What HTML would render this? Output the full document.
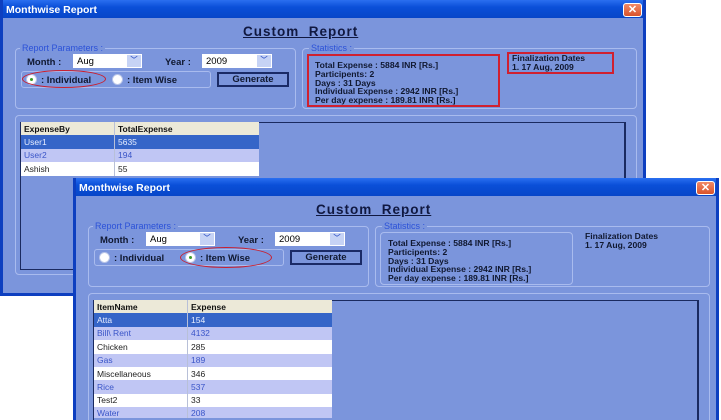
<!DOCTYPE html>
<html><head><meta charset="utf-8"><style>
*{margin:0;padding:0;box-sizing:border-box}
html,body{width:721px;height:420px;overflow:hidden}
body{background:#fff;position:relative;font-family:"Liberation Sans",Arial,sans-serif}
.win{position:absolute;width:646px;background:#7b95dc;border:3px solid #0d3fc0;border-top:none;overflow:hidden}
.tb{position:absolute;left:-3px;top:0;width:646px;height:18px;background:linear-gradient(#2a6ff0,#0a4fd8 40%,#0746c8);color:#fff;font-weight:bold;font-size:10.5px;padding:4px 0 0 6px}
.x{position:absolute;left:620px;top:3px;width:19px;height:14px;background:linear-gradient(#f08a68,#d9532c);border:1px solid #fff;border-radius:3px;color:#fff;font-size:11px;font-weight:bold;text-align:center;line-height:12px}
.a{position:absolute}
.title{font-size:13.5px;font-weight:bold;color:#101840;text-decoration:underline;letter-spacing:1px}
.fs{position:absolute;border:1px solid #a9bbee;border-radius:4px}
.lg{position:absolute;font-size:9px;color:#2c52d8;background:#7b95dc;padding:0 2px}
.lb{font-size:9.5px;font-weight:bold;color:#101830}
.cb{position:absolute;height:14px;background:#fff;font-size:9.5px;padding:2px 0 0 4px;color:#000}
.cb b{position:absolute;right:1px;top:1px;width:14px;height:12px;background:#c6d3f5;color:#3b5bc8;font-size:7px;text-align:center;line-height:12px}
.rg{position:absolute;border:1px solid #a9bbee;border-radius:3px}
.rd{position:absolute;width:11px;height:11px;border-radius:50%;background:#fff;border:1px solid #b9c5e8}
.rd.on::after{content:"";position:absolute;left:3px;top:3px;width:3px;height:3px;border-radius:50%;background:#3a9a2a}
.btn{position:absolute;height:15px;border:2px solid #1a2a66;background:#7b95dc;font-size:9.5px;font-weight:bold;text-align:center;line-height:11px;color:#101830}
.st{font-size:8.6px;font-weight:bold;color:#101830;line-height:8.8px}
.red{position:absolute;border:2px solid #d02030}
.ell{position:absolute;border:1.5px solid #c82030;border-radius:50%}
.grid{position:absolute;font-size:8.5px}
.grid div{height:13.4px;display:flex;align-items:center}
.grid span{display:block;padding-left:3px}
.grid span:first-child{width:94px;border-right:1px solid #b8c0d8;height:100%;display:flex;align-items:center}
.hd{background:#ece9d8;font-weight:bold;color:#111}
.s1{background:#3565c8;color:#e8eeff}
.s2{background:#c0c6f4;color:#3a55c8}
.s3{background:#fff;color:#222}
</style></head><body>

<!-- Window 1 -->
<div class="win" style="left:0;top:0;height:296px">
<div class="tb">Monthwise Report</div><div class="x">✕</div>
<div class="a title" style="left:240px;top:24px">Custom&nbsp; Report</div>
<div class="fs" style="left:12px;top:48px;width:281px;height:61px"></div>
<div class="lg" style="left:17px;top:43px">Report Parameters :</div>
<div class="a lb" style="left:24px;top:57px">Month :</div>
<div class="cb" style="left:70px;top:54px;width:69px">Aug<b>﹀</b></div>
<div class="a lb" style="left:162px;top:57px">Year :</div>
<div class="cb" style="left:199px;top:54px;width:70px">2009<b>﹀</b></div>
<div class="rg" style="left:18px;top:71px;width:190px;height:17px"></div>
<div class="rd on" style="left:23px;top:74px"></div>
<div class="a lb" style="left:38px;top:75px">: Individual</div>
<div class="rd" style="left:109px;top:74px"></div>
<div class="a lb" style="left:124px;top:75px">: Item Wise</div>
<div class="ell" style="left:19px;top:70px;width:84px;height:18px"></div>
<div class="btn" style="left:214px;top:72px;width:72px">Generate</div>
<div class="fs" style="left:299px;top:48px;width:335px;height:61px"></div>
<div class="lg" style="left:306px;top:43px">Statistics :</div>
<div class="red" style="left:304px;top:54px;width:193px;height:53px"></div>
<div class="a st" style="left:312px;top:61px">Total Expense : 5884 INR [Rs.]<br>Participents: 2<br>Days : 31 Days<br>Individual Expense : 2942 INR [Rs.]<br>Per day expense : 189.81 INR [Rs.]</div>
<div class="red" style="left:504px;top:52px;width:107px;height:22px"></div>
<div class="a st" style="left:509px;top:54px">Finalization Dates<br>1. 17 Aug, 2009</div>
<div class="fs" style="left:12px;top:115px;width:622px;height:160px"></div>
<div class="a" style="left:17px;top:122px;width:606px;height:148px;border:1px solid #1a2a60;border-right:2px solid #1a2a60"></div>
<div class="grid" style="left:18px;top:122px;width:238px">
<div class="hd"><span>ExpenseBy</span><span>TotalExpense</span></div>
<div class="s1"><span>User1</span><span>5635</span></div>
<div class="s2"><span>User2</span><span>194</span></div>
<div class="s3"><span>Ashish</span><span>55</span></div>
</div>
</div>

<!-- Window 2 -->
<div class="win" style="left:73px;top:178px;height:242px;border-bottom:none">
<div class="tb">Monthwise Report</div><div class="x">✕</div>
<div class="a title" style="left:240px;top:24px">Custom&nbsp; Report</div>
<div class="fs" style="left:12px;top:48px;width:281px;height:61px"></div>
<div class="lg" style="left:17px;top:43px">Report Parameters :</div>
<div class="a lb" style="left:24px;top:57px">Month :</div>
<div class="cb" style="left:70px;top:54px;width:69px">Aug<b>﹀</b></div>
<div class="a lb" style="left:162px;top:57px">Year :</div>
<div class="cb" style="left:199px;top:54px;width:70px">2009<b>﹀</b></div>
<div class="rg" style="left:18px;top:71px;width:190px;height:17px"></div>
<div class="rd" style="left:23px;top:74px"></div>
<div class="a lb" style="left:38px;top:75px">: Individual</div>
<div class="rd on" style="left:109px;top:74px"></div>
<div class="a lb" style="left:124px;top:75px">: Item Wise</div>
<div class="ell" style="left:104px;top:69px;width:92px;height:21px"></div>
<div class="btn" style="left:214px;top:72px;width:72px">Generate</div>
<div class="fs" style="left:299px;top:48px;width:335px;height:61px"></div>
<div class="lg" style="left:306px;top:43px">Statistics :</div>
<div class="fs" style="left:304px;top:54px;width:193px;height:53px"></div>
<div class="a st" style="left:312px;top:61px">Total Expense : 5884 INR [Rs.]<br>Participents: 2<br>Days : 31 Days<br>Individual Expense : 2942 INR [Rs.]<br>Per day expense : 189.81 INR [Rs.]</div>
<div class="a st" style="left:509px;top:54px">Finalization Dates<br>1. 17 Aug, 2009</div>
<div class="a" style="left:12px;top:115px;width:622px;height:127px;border:1px solid #a9bbee;border-bottom:none;border-radius:4px 4px 0 0"></div>
<div class="a" style="left:17px;top:122px;width:606px;height:120px;border:1px solid #1a2a60;border-right:2px solid #1a2a60;border-bottom:none"></div>
<div class="grid" style="left:18px;top:122px;width:238px">
<div class="hd"><span>ItemName</span><span>Expense</span></div>
<div class="s1"><span>Atta</span><span>154</span></div>
<div class="s2"><span>Bill\ Rent</span><span>4132</span></div>
<div class="s3"><span>Chicken</span><span>285</span></div>
<div class="s2"><span>Gas</span><span>189</span></div>
<div class="s3"><span>Miscellaneous</span><span>346</span></div>
<div class="s2"><span>Rice</span><span>537</span></div>
<div class="s3"><span>Test2</span><span>33</span></div>
<div class="s2" style="height:11px"><span>Water</span><span>208</span></div>
</div>
</div>
</body></html>
